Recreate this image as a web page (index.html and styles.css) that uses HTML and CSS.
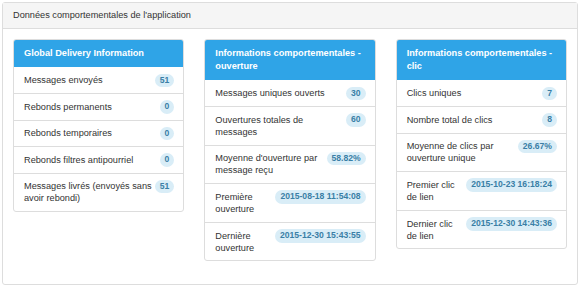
FILE: index.html
```html
<!DOCTYPE html>
<html lang="fr">
<head>
  <meta charset="UTF-8" />
  <title>Données comportementales</title>
  <link rel="stylesheet" href="styles.css">
</head>
<body>
  <div class="panel">
    <div class="panel-heading">Données comportementales de l'application</div>
    <div class="panel-body">

      <div class="card">
        <div class="card-title">Global Delivery Information</div>
        <ul class="list">
          <li><span class="badge">51</span>Messages envoyés</li>
          <li><span class="badge">0</span>Rebonds permanents</li>
          <li><span class="badge">0</span>Rebonds temporaires</li>
          <li><span class="badge">0</span>Rebonds filtres antipourriel</li>
          <li><span class="badge">51</span>Messages livrés (envoyés sans avoir rebondi)</li>
        </ul>
      </div>

      <div class="card">
        <div class="card-title">Informations comportementales - ouverture</div>
        <ul class="list">
          <li><span class="badge">30</span>Messages uniques ouverts</li>
          <li><span class="badge">60</span>Ouvertures totales de messages</li>
          <li><span class="badge">58.82%</span>Moyenne d'ouverture par message reçu</li>
          <li><span class="badge">2015-08-18 11:54:08</span>Première ouverture</li>
          <li><span class="badge">2015-12-30 15:43:55</span>Dernière ouverture</li>
        </ul>
      </div>

      <div class="card">
        <div class="card-title">Informations comportementales - clic</div>
        <ul class="list">
          <li><span class="badge">7</span>Clics uniques</li>
          <li><span class="badge">8</span>Nombre total de clics</li>
          <li><span class="badge">26.67%</span>Moyenne de clics par ouverture unique</li>
          <li><span class="badge">2015-10-23 16:18:24</span>Premier clic de lien</li>
          <li><span class="badge">2015-12-30 14:43:36</span>Dernier clic de lien</li>
        </ul>
      </div>

    </div>
  </div>
</body>
</html>
```

FILE: styles.css
```css
* {
  box-sizing: border-box;
}
body {
  margin: 2px;
  font-family: "Liberation Sans", Helvetica, Arial, sans-serif;
  font-size: 9.2px;
  line-height: 1.42;
  color: #333;
  background: #fff;
}
.panel {
  width: 576px;
  border: 1px solid #ddd;
  border-radius: 3px;
  background: #fff;
}
.panel-heading {
  background: #f5f5f5;
  border-bottom: 1px solid #ddd;
  padding: 6px 10px;
  color: #333;
}
.panel-body {
  padding: 10px 10px 0;
  display: grid;
  grid-template-columns: repeat(3, 1fr);
  gap: 20px;
  align-items: start;
}
.card {
  border: 1px solid #ddd;
  border-radius: 3px;
  margin-bottom: 23px;
  overflow: hidden;
}
.card-title {
  background: #2fa4e7;
  color: #fff;
  font-weight: bold;
  padding: 6.6px 10px;
  margin: -1px -1px 0;
  border: 1px solid #2fa4e7;
}
.list {
  list-style: none;
  margin: 0;
  padding: 0;
}
.list li {
  padding: 6.8px 9px 6.8px 10px;
  line-height: 12px;
  border-top: 1px solid #ddd;
}
.list li:first-child {
  border-top: none;
}
.badge {
  float: right;
  margin-left: 1px;
  margin-top: -0.5px;
  padding: 2px 5px;
  border-radius: 7px;
  background: #d9edf7;
  color: #3a7fa6;
  font-size: 8.6px;
  font-weight: bold;
  line-height: 1.1;
}
```
